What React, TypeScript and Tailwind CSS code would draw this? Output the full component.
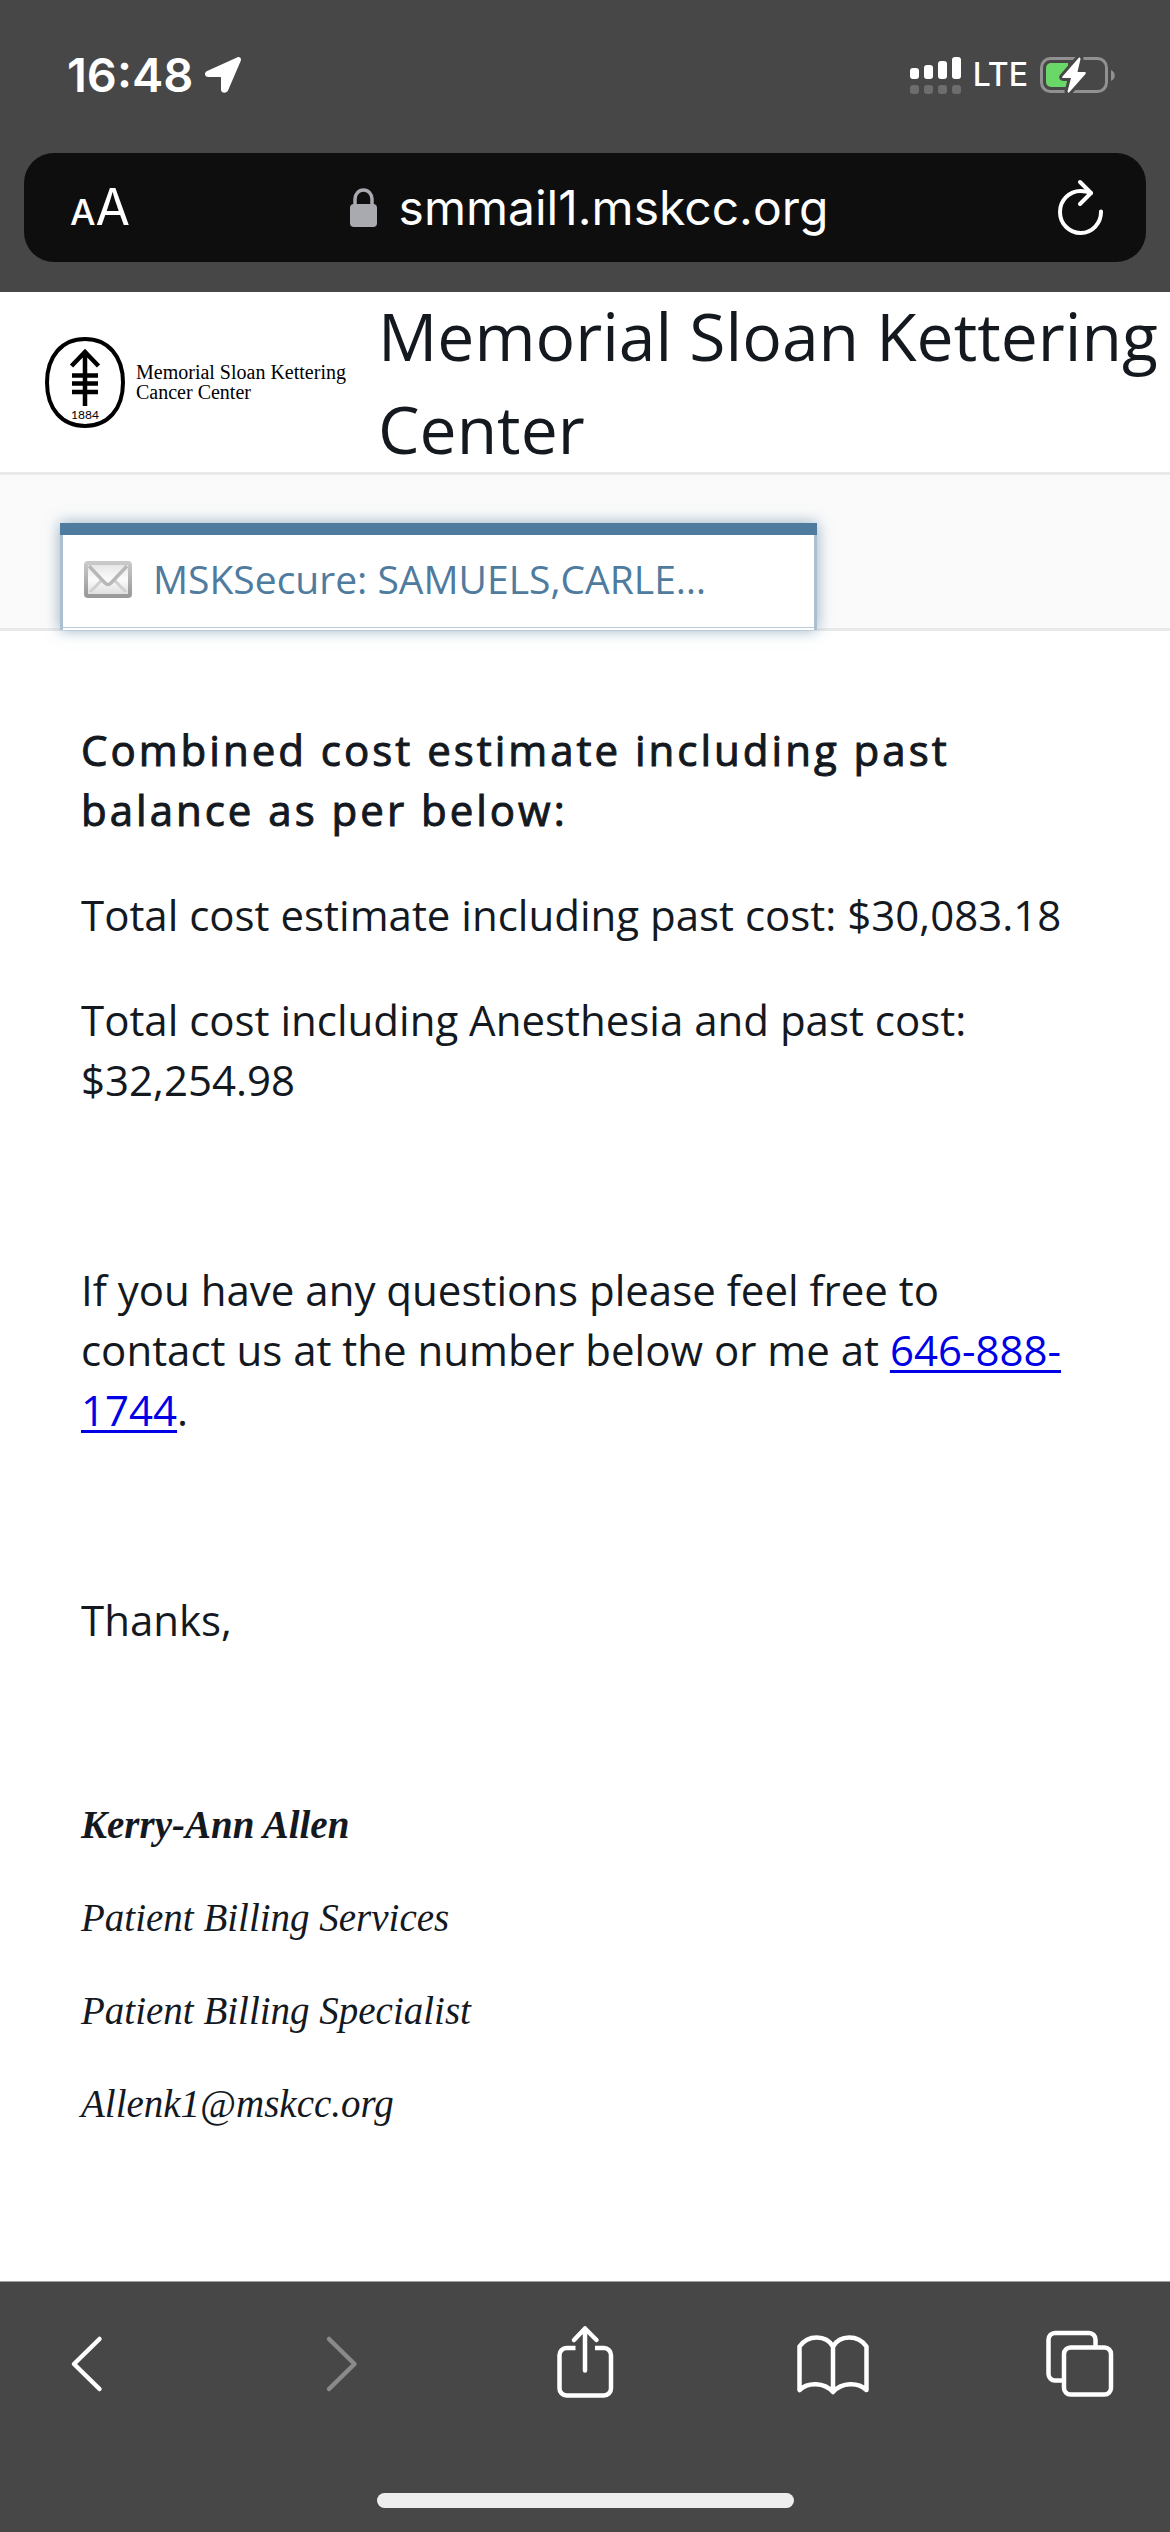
import type { ReactNode } from "react";

const uiFont = "font-[Inter,'Liberation_Sans',sans-serif]";

const SIGNAL_BARS = [
  { x: 0, top: 11, height: 11 },
  { x: 14, top: 8, height: 14 },
  { x: 28, top: 4, height: 18 },
  { x: 42, top: 0, height: 22 },
];

const SIGNATURE = [
  "Patient Billing Services",
  "Patient Billing Specialist",
  "Allenk1@mskcc.org",
];

const LocationIcon = () => (
  <svg className="h-9 w-9" viewBox="0 0 36 36" fill="#fff" aria-hidden="true">
    <path d="M32.5 0.2C34.8-.5 36.6 1.5 35.8 3.8L23 33.5C21.7 36.6 16 36.5 16 32.5V20.5C16 20.2 15.8 20 15.5 20H3.5C-.6 20-1.2 15.6 2.2 14Z" />
  </svg>
);

const SignalIcon = () => (
  <svg className="h-[37px] w-[51px]" viewBox="0 0 51 37" aria-hidden="true">
    {SIGNAL_BARS.map((bar) => (
      <g key={bar.x}>
        <rect x={bar.x} y={bar.top} width="9" height={bar.height} rx="3" fill="#fff" />
        <rect x={bar.x} y="28" width="9" height="9" rx="3" fill="#6d6d6d" />
      </g>
    ))}
  </svg>
);

const BatteryIcon = () => (
  <svg className="h-[38px] w-[76px]" viewBox="0 0 76 38" aria-hidden="true">
    <rect x="1.5" y="2.5" width="65" height="33" rx="9" fill="none" stroke="#919191" strokeWidth="3" />
    <path d="M71 14c5 2 5 9 0 11z" fill="#919191" />
    <path d="M11 7h17v24H11a5 5 0 0 1-5-5V12a5 5 0 0 1 5-5z" fill="#69d868" />
    <path
      d="M39 1.5L22.5 20.5Q21.5 22 23.5 22H31L27.5 35.5Q28 37.5 29.5 36L45.5 18Q46.5 16 44.5 16H37.5L40.5 3Q40.5 1 39 1.5Z"
      fill="#fff"
      stroke="#474747"
      strokeWidth="6"
      paintOrder="stroke"
    />
  </svg>
);

const LockIcon = () => (
  <svg className="h-[39px] w-[27px]" viewBox="0 0 27 39" aria-hidden="true">
    <path d="M5 18V11a8.5 9 0 0 1 17 0v7" fill="none" stroke="#a9a9b0" strokeWidth="3.5" />
    <rect x="0" y="16" width="27" height="23" rx="4" fill="#a9a9b0" />
  </svg>
);

const ReloadIcon = () => (
  <svg
    className="h-[60px] w-[46px]"
    viewBox="0 0 46 60"
    fill="none"
    stroke="#fff"
    strokeWidth="4"
    strokeLinecap="round"
    strokeLinejoin="round"
    aria-hidden="true"
  >
    <path d="M43 33.5A20.5 21 0 1 1 22.5 13Q28 13 33 15" />
    <path d="M22 4L33 15L22 26" />
  </svg>
);

const MskLogo = () => (
  <svg className="h-[91px] w-20 shrink-0" viewBox="0 0 80 91" fill="none" stroke="#000" aria-hidden="true">
    <path
      d="M40 2C63 2 78 19 78 45.5S63 89 40 89S2 72 2 45.5S17 2 40 2Z"
      strokeWidth="4"
    />
    <path d="M40 15V69M26.5 29L40 15L53.5 29M27 38.5H53M27 46.5H53M27 55H53" strokeWidth="4.5" />
    <text
      x="40"
      y="82"
      textAnchor="middle"
      fill="#000"
      stroke="none"
      fontSize="12"
      fontFamily="Lato, sans-serif"
    >
      1884
    </text>
  </svg>
);

const MailIcon = () => (
  <svg className="h-10 w-12 shrink-0" viewBox="0 0 48 40" aria-hidden="true">
    <defs>
      <linearGradient id="envelope" x1="0" y1="0" x2="0" y2="1">
        <stop offset="0" stopColor="#e4e4e4" />
        <stop offset=".5" stopColor="#fbfbfb" />
        <stop offset="1" stopColor="#dcdcdc" />
      </linearGradient>
      <linearGradient id="edge" x1="0" y1="0" x2="0" y2="1">
        <stop offset="0" stopColor="#c9c9c9" />
        <stop offset="1" stopColor="#999" />
      </linearGradient>
    </defs>
    <rect x="2" y="3" width="44" height="33" rx="2" fill="url(#envelope)" stroke="url(#edge)" strokeWidth="4" />
    <path d="M6 32L18 20M42 32L30 20" stroke="#d0d0d0" strokeWidth="3" />
    <path d="M5 6L21 23Q24 26 27 23L43 6" fill="none" stroke="#b8b8b8" strokeWidth="3.5" />
  </svg>
);

const ToolbarIcon = ({ children }: { children: ReactNode }) => (
  <svg
    className="h-[76px] w-[76px]"
    viewBox="0 0 76 76"
    fill="none"
    stroke="currentColor"
    strokeWidth="4.5"
    strokeLinejoin="round"
    aria-hidden="true"
  >
    {children}
  </svg>
);

const StatusBar = () => (
  <div className="flex h-[153px] items-start justify-between pt-[47px] pr-[54px] pl-[67px]">
    <div className="flex h-14 items-center gap-3">
      <span className="text-[47px] leading-14 font-semibold">16:48</span>
      <LocationIcon />
    </div>
    <div className="flex h-14 items-center gap-3">
      <SignalIcon />
      <span className="text-[32px] leading-14 font-medium">LTE</span>
      <BatteryIcon />
    </div>
  </div>
);

const AddressBar = () => (
  <div className="mx-6 flex h-[109px] items-center justify-between rounded-[30px] bg-[#0e0e0e] pr-[42px] pl-[46px]">
    <button type="button" aria-label="Text size" className="flex w-[56px] items-baseline">
      <span className="text-[36px] font-medium">A</span>
      <span className="text-[50px]">A</span>
    </button>
    <button type="button" className="flex items-center gap-[22px]">
      <LockIcon />
      <span className="text-[48px] leading-[60px]">smmail1.mskcc.org</span>
    </button>
    <button type="button" aria-label="Reload" className="flex w-[52px] justify-end">
      <ReloadIcon />
    </button>
  </div>
);

const SiteHeader = () => (
  <header className="flex h-[183px] items-center gap-9 border-b-3 border-[#e8eaea] pl-[45px]">
    <div className="flex shrink-0 items-center gap-[11px] text-black">
      <MskLogo />
      <p className="w-[206px] font-['Liberation_Serif',serif] text-[20px] leading-5 whitespace-nowrap">
        Memorial Sloan Kettering
        <br />
        Cancer Center
      </p>
    </div>
    <h1 className="text-[66px] leading-[93px]">
      Memorial Sloan Kettering
      <br />
      Center
    </h1>
  </header>
);

const MessageTab = () => (
  <nav className="h-[156px] border-b-3 border-[#e8eaea] bg-[#fafafa] pt-12 pl-[60px]">
    <a
      href="#message"
      className="block h-[107px] w-[757px] border-t-12 border-[#4f7b9e] bg-[#adc0cf] px-[3px] text-[39px] text-[#4f7b9e] shadow-[0_0_14px_rgba(79,123,158,0.6)]"
    >
      <span className="flex h-full items-center gap-[21px] border-b-2 border-white bg-white pb-1 pl-[21px] shadow-[inset_0_-1px_0_#b9cbd9]">
        <MailIcon />
        <span>MSKSecure: SAMUELS,CARLE…</span>
      </span>
    </a>
  </nav>
);

const Message = () => (
  <main id="message" className="flex-1 px-[81px] pt-[89px] text-[42px] leading-[60px]">
    <div className="space-y-[45px]">
      <p className="tracking-[3px] [-webkit-text-stroke:1px]">
        Combined cost estimate including past balance as per below:
      </p>
      <p>Total cost estimate including past cost: $30,083.18</p>
      <p>Total cost including Anesthesia and past cost: $32,254.98</p>
      <p>&nbsp;</p>
      <p>
        If you have any questions please feel free to contact us at the number below or me at{" "}
        <a
          href="tel:646-888-1744"
          className="text-[#0000e6] underline decoration-3 underline-offset-4"
        >
          646-888-1744
        </a>
        .
      </p>
      <p>&nbsp;</p>
      <p>Thanks,</p>
      <p>&nbsp;</p>
    </div>
    <div className="mt-[46px] space-y-[45px] font-['Liberation_Serif',serif] text-[39px] leading-12 italic">
      <p className="font-bold">Kerry-Ann Allen</p>
      {SIGNATURE.map((line) => (
        <p key={line}>{line}</p>
      ))}
    </div>
  </main>
);

const Toolbar = () => (
  <footer className="flex h-[251px] flex-col items-center justify-between border-t border-[#a0a0a0] bg-[#474747] pt-10 pb-6 text-white">
    <div className="flex w-full justify-between px-[52px]">
      <button type="button" aria-label="Back">
        <ToolbarIcon>
          <path d="M47.5 17L22 42L47.5 67" strokeLinecap="round" />
        </ToolbarIcon>
      </button>
      <button type="button" aria-label="Forward" disabled className="text-[#8a8a8a]">
        <ToolbarIcon>
          <path d="M29 17L54.5 42L29 67" strokeLinecap="round" />
        </ToolbarIcon>
      </button>
      <button type="button" aria-label="Share">
        <ToolbarIcon>
          <path d="M28.5 26H19.5a7 7 0 0 0-7 7V66.5a7 7 0 0 0 7 7H57a7 7 0 0 0 7-7V33a7 7 0 0 0-7-7H48" />
          <path d="M38 48.5V6.5M27 18L38 6.5L49.5 18" strokeLinecap="round" />
        </ToolbarIcon>
      </button>
      <button type="button" aria-label="Bookmarks">
        <ToolbarIcon>
          <path d="M4.5 68V24.5C13 12.5 31 12.5 38 24.5C45 12.5 63 12.5 71.5 24.5V68C63 60 47 60 38 70C29 60 13 60 4.5 68ZM38 24.5V70" />
        </ToolbarIcon>
      </button>
      <button type="button" aria-label="Tabs">
        <ToolbarIcon>
          <path d="M22 58.5H13a6.5 6.5 0 0 1-6.5-6.5V17.5A6.5 6.5 0 0 1 13 11H47a6.5 6.5 0 0 1 6.5 6.5V25.5" />
          <rect x="22" y="25.5" width="47" height="47" rx="6.5" />
        </ToolbarIcon>
      </button>
    </div>
    <div className="h-[15px] w-[417px] rounded-full bg-[#eee]" />
  </footer>
);

export default function App() {
  return (
    <div className="flex min-h-screen flex-col bg-white font-['Open_Sans',sans-serif] text-[#14191f]">
      <div className={`${uiFont} bg-[#474747] pb-[30px] text-white`}>
        <StatusBar />
        <AddressBar />
      </div>
      <SiteHeader />
      <MessageTab />
      <Message />
      <Toolbar />
    </div>
  );
}
